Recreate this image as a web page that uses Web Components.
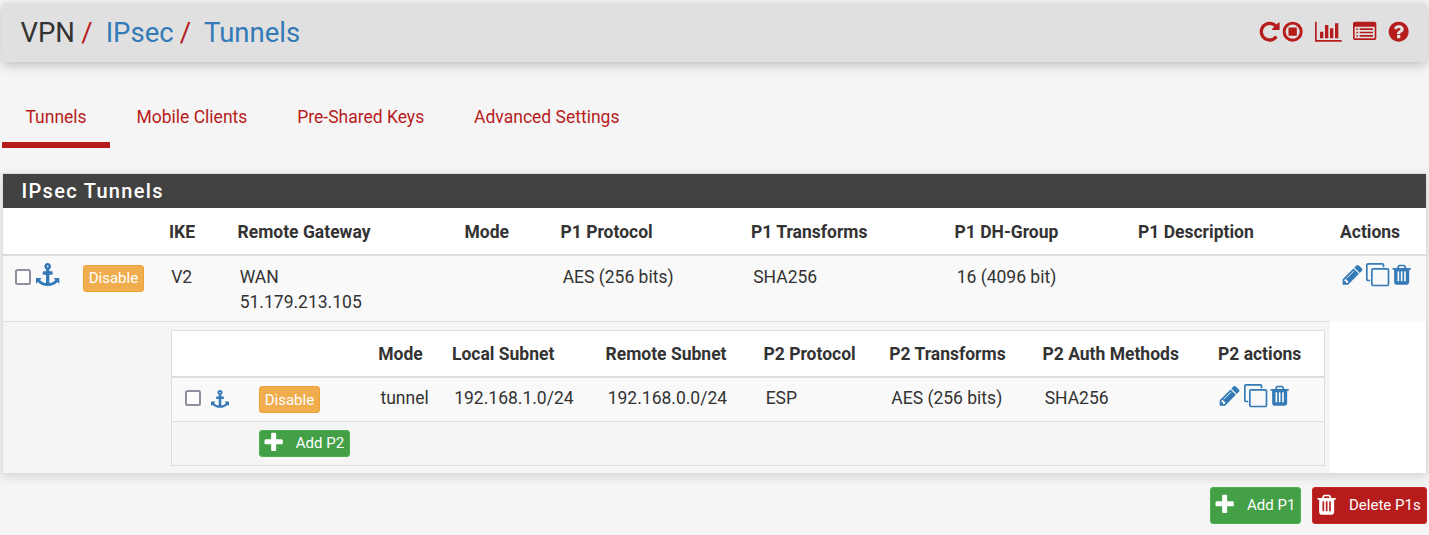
<!DOCTYPE html>
<html lang="en">
<head>
<meta charset="utf-8">
<title>VPN: IPsec: Tunnels</title>
<style>
html { background: #f5f5f5; }
body { margin: 0; padding: 3px 2px 0; height: 532px; box-sizing: border-box; overflow: hidden; font: 17.5px/25px Roboto, sans-serif; color: #333; }
</style>
</head>
<body>
<vpn-page></vpn-page>
<script>
const ICONS = {
  repeat: '<path d="M1664 256v448q0 26-19 45t-45 19h-448q-42 0-59-40-17-39 14-69l138-138q-148-137-349-137-104 0-198.500 40.500t-163.500 109.500-109.500 163.500-40.500 198.500 40.500 198.500 109.500 163.500 163.500 109.500 198.500 40.500q119 0 225-52t179-147q7-10 23-12 15 0 25 9l137 138q9 8 9.500 20.500t-7.500 22.500q-109 132-264 204.500t-327 72.500q-156 0-298-61t-245-164-164-245-61-298 61-298 164-245 245-164 298-61q147 0 284.500 55.500t244.500 156.500l130-129q29-31 70-14 39 17 39 59z"/>',
  stop: '<circle cx="896" cy="896" r="656" fill="none" stroke="currentColor" stroke-width="224"/><rect x="576" y="576" width="640" height="640" rx="32"/>',
  chart: '<path d="M640 896v512H384V896zM1024 384v1024H768V384zM2048 1536v128H0V128h128v1408zM1408 640v768h-256V640zM1792 256v1152h-256V256z"/>',
  list: '<path fill-rule="evenodd" d="M160 128H1632q66 0 113 47t47 113V1376q0 66-47 113t-113 47H160q-66 0-113-47T0 1376V288q0-66 47-113t113-47zM160 512q-32 0-32 32v832q0 32 32 32H1632q32 0 32-32V544q0-32-32-32zM288 640h64q32 0 32 32v64q0 32-32 32h-64q-32 0-32-32v-64q0-32 32-32zM288 896h64q32 0 32 32v64q0 32-32 32h-64q-32 0-32-32v-64q0-32 32-32zM288 1152h64q32 0 32 32v64q0 32-32 32h-64q-32 0-32-32v-64q0-32 32-32zM512 640h1024v128H512zM512 896h1024v128H512zM512 1152h1024v128H512z"/>',
  help: '<path d="M1024 1376v-192q0-14-9-23t-23-9h-192q-14 0-23 9t-9 23v192q0 14 9 23t23 9h192q14 0 23-9t9-23zm256-672q0-88-55.500-163t-138.500-116-170-41q-243 0-371 213-15 24 8 42l132 100q7 6 19 6 16 0 25-12 53-68 86-92 34-24 86-24 48 0 85.500 26t37.500 59q0 38-20 61t-68 45q-63 28-115.500 86.500t-52.500 125.500v36q0 14 9 23t23 9h192q14 0 23-9t9-23q0-19 21.500-49.500t54.500-49.500q32-18 49-28.500t46-35 44.500-48 28-60.500 12.500-81zm384 192q0 209-103 385.500t-279.500 279.500-385.500 103-385.500-103-279.500-279.500-103-385.500 103-385.500 279.500-279.500 385.500-103 385.500 103 279.500 279.500 103 385.500z"/>',
  pencil: '<path d="M491 1536l91-91-235-235-91 91v107h128v128h107zm523-928q0-22-22-22-10 0-17 7l-542 542q-7 7-7 17 0 22 22 22 10 0 17-7l542-542q7-7 7-17zm-54-192l416 416-832 832h-416v-416zm683 96q0 53-37 90l-166 166-416-416 166-165q36-38 90-38 53 0 91 38l235 234q37 39 37 91z"/>',
  clone: '<path d="M1664 1632v-1088q0-13-9.500-22.500t-22.500-9.500h-1088q-13 0-22.500 9.500t-9.500 22.500v1088q0 13 9.500 22.500t22.500 9.500h1088q13 0 22.500-9.500t9.500-22.500zm128-1088v1088q0 66-47 113t-113 47h-1088q-66 0-113-47t-47-113v-1088q0-66 47-113t113-47h1088q66 0 113 47t47 113zm-384-384v160h-128v-160q0-13-9.500-22.500t-22.500-9.500h-1088q-13 0-22.500 9.500t-9.500 22.500v1088q0 13 9.500 22.500t22.500 9.500h160v128h-160q-66 0-113-47t-47-113v-1088q0-66 47-113t113-47h1088q66 0 113 47t47 113z"/>',
  trash: '<path d="M704 1376v-704q0-14-9-23t-23-9h-64q-14 0-23 9t-9 23v704q0 14 9 23t23 9h64q14 0 23-9t9-23zm256 0v-704q0-14-9-23t-23-9h-64q-14 0-23 9t-9 23v704q0 14 9 23t23 9h64q14 0 23-9t9-23zm256 0v-704q0-14-9-23t-23-9h-64q-14 0-23 9t-9 23v704q0 14 9 23t23 9h64q14 0 23-9t9-23zm-544-992h448l-48-117q-7-9-17-11h-317q-10 2-17 11zm928 32v64q0 14-9 23t-23 9h-96v948q0 83-47 143.500t-113 60.500h-832q-66 0-113-58.500t-47-141.500v-952h-96q-14 0-23-9t-9-23v-64q0-14 9-23t23-9h309l70-167q15-37 54-63t79-26h320q40 0 79 26t54 63l70 167h309q14 0 23 9t9 23z"/>',
  plus: '<path d="M1600 736v192q0 40-28 68t-68 28h-416v416q0 40-28 68t-68 28h-192q-40 0-68-28t-28-68v-416h-416q-40 0-68-28t-28-68v-192q0-40 28-68t68-28h416v-416q0-40 28-68t68-28h192q40 0 68 28t28 68v416h416q40 0 68 28t28 68z"/>',
  anchor: '<path d="M960 256q0-26-19-45t-45-19-45 19-19 45 19 45 45 19 45-19 19-45zm832 928v352q0 22-20 30-8 2-12 2-12 0-23-9l-93-93q-119 143-318.500 226.500t-429.500 83.500-429.500-83.500-318.500-226.500l-93 93q-9 9-23 9-4 0-12-2-20-8-20-30v-352q0-14 9-23t23-9h352q22 0 30 20 8 19-7 35l-100 100q67 91 189.500 153.500t271.500 82.500v-647h-192q-26 0-45-19t-19-45v-128q0-26 19-45t45-19h192v-163q-58-34-93-92.500t-35-128.500q0-106 75-181t181-75 181 75 75 181q0 70-35 128.500t-93 92.500v163h192q26 0 45 19t19 45v128q0 26-19 45t-45 19h-192v647q149-20 271.500-82.500t189.500-153.500l-100-100q-15-16-7-35 8-20 30-20h352q14 0 23 9t9 23z"/>'
};

function define(name, html) {
  customElements.define(name, class extends HTMLElement {
    constructor() {
      super();
      this.attachShadow({ mode: 'open' }).innerHTML = html;
    }
  });
}

customElements.define('fa-icon', class extends HTMLElement {
  connectedCallback() {
    if (this.shadowRoot) return;
    const name = this.getAttribute('name');
    const w = name === 'chart' ? 2048 : 1792;
    this.attachShadow({ mode: 'open' }).innerHTML =
      `<style>:host{display:block;flex:none;height:var(--icon-size,23.33px);width:calc(var(--icon-size,23.33px) * ${w / 1792})}
       svg{display:block;width:100%;height:100%;fill:currentColor;overflow:visible}</style>
       <svg viewBox="0 0 ${w} 1792">${ICONS[name]}</svg>`;
  }
});

define('ui-button', `<style>
:host{display:flex;box-sizing:border-box;flex:none;height:27px;border:1px solid #eea236;border-radius:3px;background:#f0ad4e;color:#fff;font-size:15px;line-height:25px;align-items:center;padding-left:4.700px;white-space:nowrap}
:host([kind=success]){background:#43a047;border-color:#4caf50}
:host([kind=danger]){background:#b71c1c;border-color:#c62828}
</style><slot></slot>`);

define('check-box', `<style>
:host{display:block;box-sizing:border-box;flex:none;width:16px;height:16px;border:2px solid #8f8f9d;border-radius:2.5px;background:#fff}
</style>`);

define('page-header', `<style>
:host{display:flex;height:59px;border-radius:4px;background:#e0e0e0;box-shadow:0 3px 12px rgba(0,0,0,.23);justify-content:space-between}
nav{display:flex;padding:10px 0 0 18.500px;font-size:27.5px;line-height:40px;white-space:pre}
a{color:#337ab7} i{font-style:normal;color:#b71c1c}
.tools{display:flex;color:#b71c1c;padding:17.300px 17px 0 0}
</style>
<nav><span>VPN</span><i style="margin-left:6.300px">/</i><a style="margin-left:13px">IPsec</a><i style="margin-left:6px">/</i><a style="margin-left:13px">Tunnels</a></nav>
<div class="tools"><fa-icon name="repeat"></fa-icon><fa-icon name="stop" style="margin-left:.1px"></fa-icon><fa-icon name="chart" style="margin-left:10.200px"></fa-icon><fa-icon name="list" style="margin-left:11.700px"></fa-icon><fa-icon name="help" style="margin-left:10px"></fa-icon></div>`);

define('tab-item', `<style>
:host{display:block;box-sizing:border-box;height:61px;padding:18px 23.450px 0 23.450px;border-bottom:6px solid transparent;color:#b71c1c;white-space:nowrap}
:host([active]){border-color:#b71c1c}
</style><slot></slot>`);

define('tab-bar', `<style>
:host{display:flex;margin-top:25px;gap:3px}
</style>
<tab-item active>Tunnels</tab-item><tab-item>Mobile Clients</tab-item><tab-item>Pre-Shared Keys</tab-item><tab-item>Advanced Settings</tab-item>`);

const ROW = `.row{display:grid;box-sizing:border-box;white-space:nowrap}
.head{height:47px;padding:11px 0 0 1px;background:#fff;border-bottom:2px solid #ddd;font-weight:700}
.controls,.actions{display:flex;align-items:flex-start}
.actions,.anchor{color:#337ab7}`;

define('phase-two-table', `<style>
:host{display:block;box-sizing:border-box;width:1154px;height:136px;border:1px solid #ddd}
${ROW}
.row{grid-template-columns:205.300px 73.700px 153.500px 158px 125.700px 153.300px 175.500px auto}
.data{height:44px;background:#f9f9f9;border-bottom:1px solid #ddd}
.data>span{padding:7.500px 0 0 3.200px}
.add{display:flex;padding:8px 0 0 87px}
</style>
<div class="row head"><span></span><span>Mode</span><span>Local Subnet</span><span>Remote Subnet</span><span>P2 Protocol</span><span>P2 Transforms</span><span>P2 Auth Methods</span><span>P2 actions</span></div>
<div class="row data">
<div class="controls"><check-box style="margin:12px 0 0 13px"></check-box><fa-icon class="anchor" name="anchor" style="--icon-size:18px;margin:12px 0 0 9.500px"></fa-icon><ui-button style="margin:8px 0 0 30.500px;width:61px;line-height:26px">Disable</ui-button></div>
<span>tunnel</span><span>192.168.1.0/24</span><span>192.168.0.0/24</span><span>ESP</span><span>AES (256 bits)</span><span>SHA256</span>
<div class="actions" style="padding-top:6px;margin-left:1.500px"><fa-icon name="pencil"></fa-icon><fa-icon name="clone" style="margin-left:2.300px"></fa-icon><fa-icon name="trash" style="margin-left:.8px"></fa-icon></div>
</div>
<div class="add"><ui-button kind="success" style="width:91px;padding-left:2px"><fa-icon name="plus" style="margin-top:-1px"></fa-icon><span style="margin-left:10.500px">Add P2</span></ui-button></div>`);

define('tunnel-panel', `<style>
:host{display:block;box-sizing:border-box;margin-top:25px;height:301px;border:1px solid #ddd;background:#fff;box-shadow:0 3px 10px rgba(0,0,0,.13)}
h2{margin:0;box-sizing:border-box;height:34px;padding:5px 0 0 18.600px;background:#424242;color:#fff;font-size:20px;line-height:25px;font-weight:500;letter-spacing:1.300px}
${ROW}
.head{margin-top:1px}
.row{grid-template-columns:165px 68.500px 227px 96px 190.500px 203.500px 183.500px 202px auto}
.data{height:65px;background:#f9f9f9}
.data>span{padding:8.500px 0 0 3.200px}
.nest{box-sizing:border-box;width:1327px;height:152px;padding:8px 0 0 168px;border-top:1px solid #ddd;background:#f5f5f5}
</style>
<h2>IPsec Tunnels</h2>
<div class="row head"><span></span><span>IKE</span><span>Remote Gateway</span><span>Mode</span><span>P1 Protocol</span><span>P1 Transforms</span><span>P1 DH-Group</span><span>P1 Description</span><span>Actions</span></div>
<div class="row data">
<div class="controls"><check-box style="margin:13px 0 0 12px"></check-box><fa-icon class="anchor" name="anchor" style="margin:7px 0 0 4.700px"></fa-icon><ui-button style="margin:9px 0 0 24px;width:61px">Disable</ui-button></div>
<span>V2</span><span>WAN<br>51.179.213.105</span><span></span><span>AES (256 bits)</span><span>SHA256</span><span>16 (4096 bit)</span><span></span>
<div class="actions" style="padding-top:7px;margin-left:1.500px"><fa-icon name="pencil"></fa-icon><fa-icon name="clone" style="margin-left:2.300px"></fa-icon><fa-icon name="trash" style="margin-left:.8px"></fa-icon></div>
</div>
<div class="nest"><phase-two-table></phase-two-table></div>`);

define('page-actions', `<style>
:host{display:flex;justify-content:flex-end;gap:11px;margin-top:13px}
ui-button{height:37px;padding-left:2px}
fa-icon{margin:-1px 0 0 -.5px}
</style>
<ui-button kind="success" style="width:91px"><fa-icon name="plus"></fa-icon><span style="margin-left:11.200px">Add P1</span></ui-button>
<ui-button kind="danger" style="width:115px"><fa-icon name="trash"></fa-icon><span style="margin-left:11.200px">Delete P1s</span></ui-button>`);

define('vpn-page', `<style>:host{display:block}</style>
<page-header></page-header><tab-bar></tab-bar><tunnel-panel></tunnel-panel><page-actions></page-actions>`);
</script>
</body>
</html>
